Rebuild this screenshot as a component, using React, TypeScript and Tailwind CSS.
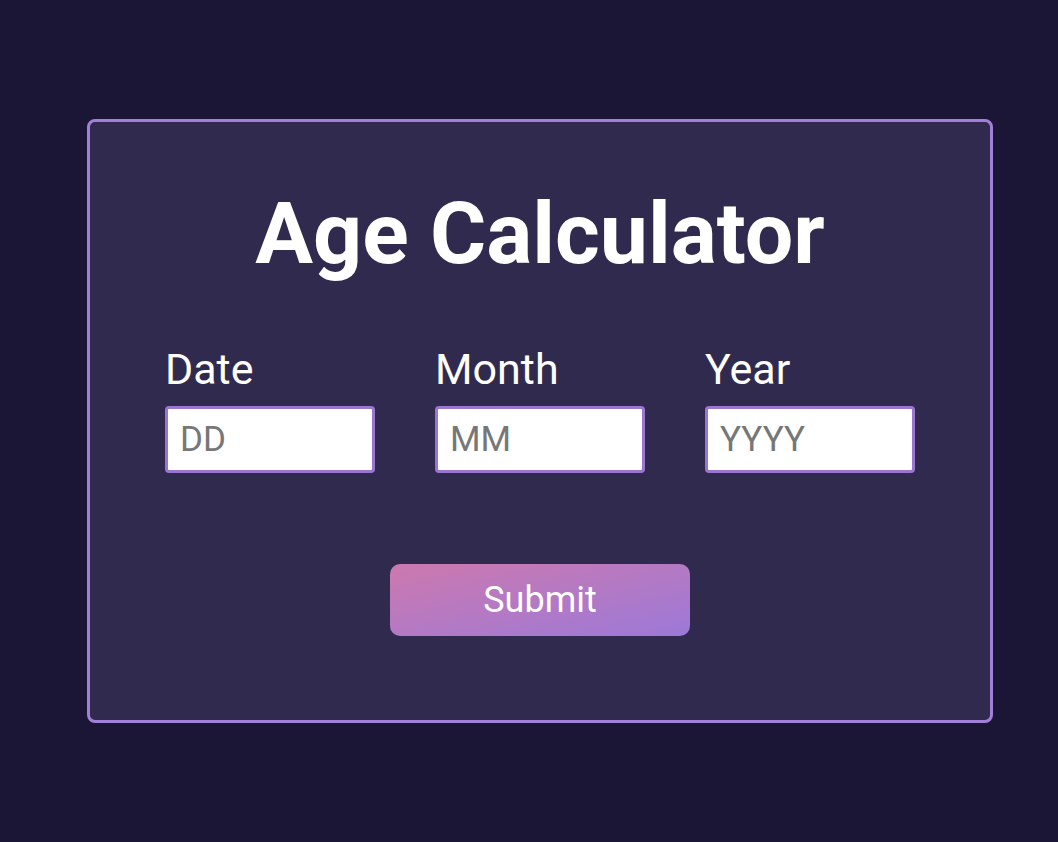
export default function App() {
  const fields = [
    { id: "date", label: "Date", placeholder: "DD" },
    { id: "month", label: "Month", placeholder: "MM" },
    { id: "year", label: "Year", placeholder: "YYYY" },
  ];

  return (
    <div
      className="flex h-[842px] items-center bg-[#1b1635] pl-[87px]"
      style={{ fontFamily: "Roboto, 'Open Sans', sans-serif" }}
    >
      <div className="flex h-[604px] w-[906px] flex-col items-center rounded-[8px] border-[3px] border-[#a27fd8] bg-[#312a4f] pt-[60px]">
        <h1 className="text-[86px] font-bold leading-[104px] text-white">Age Calculator</h1>

        <form className="mt-[58px] flex flex-col items-center">
          <div className="flex gap-[60px]">
            {fields.map((f) => (
              <div key={f.id} className="flex flex-col">
                <label htmlFor={f.id} className="text-[43px] leading-[50px] text-white">
                  {f.label}
                </label>
                <input
                  id={f.id}
                  type="text"
                  placeholder={f.placeholder}
                  className="mt-[12px] h-[67px] w-[210px] rounded-[4px] border-[3px] border-[#9b76cf] bg-white px-[12px] text-[35px] text-[#222] outline-none placeholder:text-[#777]"
                />
              </div>
            ))}
          </div>

          <button
            type="submit"
            className="mt-[91px] h-[72px] w-[300px] rounded-[10px] bg-gradient-to-br from-[#cc78ae] to-[#9c78d8] text-[36px] text-white"
          >
            Submit
          </button>
        </form>
      </div>
    </div>
  );
}
